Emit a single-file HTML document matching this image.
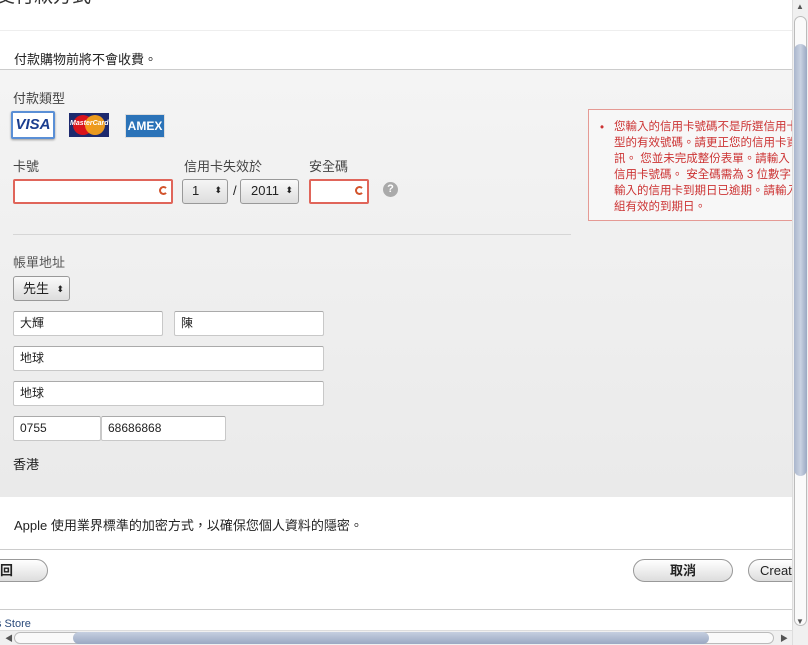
<!DOCTYPE html>
<html><head><meta charset="utf-8"><style>
*{margin:0;padding:0;box-sizing:border-box}
body{width:808px;height:645px;overflow:hidden;background:#fff;font-family:"Liberation Sans","Noto Sans CJK TC",sans-serif;font-size:12px;color:#222;position:relative}
.a{position:absolute}
.inp{position:absolute;background:#fff;border:1px solid #c8c8c8;border-top-color:#aaa;height:25px;font-size:12px;padding:0 6px;line-height:23px;border-radius:2px}
.err{border:2px solid #e0655a;background:#fff;border-radius:2px}
.sel{position:absolute;background:linear-gradient(#fafafa,#ddd);border:1px solid #999;border-radius:3px;font-size:13px;line-height:21px}
.sel .ar{position:absolute;right:5px;top:0;font-size:9px}
.btn{position:absolute;height:23px;border:1px solid #999;border-radius:12px;background:linear-gradient(#fff,#ddd);font-weight:bold;font-size:13px;text-align:center;line-height:21px}
.cc{position:absolute;right:3px;top:5px;width:9px;height:9px;border:2.5px solid #d2542c;border-radius:50%;border-right-color:transparent}
</style></head><body>
<div class="a" style="left:-4px;top:-19px;font-size:19px;color:#333">支付款方式</div>
<div class="a" style="left:0;top:30px;width:792px;height:1px;background:#eee"></div>
<div class="a" style="left:14px;top:49px;font-size:13px">付款購物前將不會收費。</div>
<div class="a" style="left:0;top:69px;width:792px;height:428px;background:linear-gradient(#f4f4f4,#eaeaea);border-top:1px solid #ccc"></div>
<div class="a" style="left:13px;top:88px;font-size:13px;color:#444">付款類型</div>
<div class="a" style="left:11px;top:111px;width:44px;height:28px;border:2px solid #5a8fd6;border-radius:2px;background:#fff;font:italic bold 15px 'Liberation Sans';color:#1a3d8f;text-align:center;line-height:24px;box-shadow:0 1px 2px #999">VISA</div>
<div class="a" style="left:69px;top:113px;width:40px;height:24px;background:#1d2a6e;overflow:hidden">
<div class="a" style="left:4px;top:2px;width:20px;height:20px;border-radius:50%;background:#d9141c"></div>
<div class="a" style="left:16px;top:2px;width:20px;height:20px;border-radius:50%;background:#f6a01a;opacity:.95"></div>
<div class="a" style="left:1px;top:7px;font:italic bold 7px 'Liberation Sans';color:#fff">MasterCard</div></div>
<div class="a" style="left:125px;top:114px;width:40px;height:24px;background:#2b73b8;border:1px solid #ddd;font:bold 12px 'Liberation Sans';color:#fff;text-align:center;line-height:22px">AMEX</div>
<div class="a" style="left:13px;top:156px;font-size:13px;color:#444">卡號</div>
<div class="a" style="left:184px;top:156px;font-size:13px;color:#444">信用卡失效於</div>
<div class="a" style="left:309px;top:156px;font-size:13px;color:#444">安全碼</div>
<div class="a err" style="left:13px;top:179px;width:160px;height:25px"><div class="cc"></div></div>
<div class="sel err" style="left:182px;top:179px;width:46px;height:25px;background:linear-gradient(#f5f5f5,#ddd);padding:0 9px">1<span class="ar">⬍</span></div>
<div class="a" style="left:233px;top:183px;font-size:13px">/</div>
<div class="sel" style="left:240px;top:179px;width:59px;height:25px;padding:0 10px">2011<span class="ar">⬍</span></div>
<div class="a err" style="left:309px;top:179px;width:60px;height:25px"><div class="cc"></div></div>
<div class="a" style="left:383px;top:182px;width:15px;height:15px;border-radius:50%;background:#aaa;color:#fff;font:bold 11px 'Liberation Sans';text-align:center;line-height:15px">?</div>
<div class="a" style="left:13px;top:234px;width:558px;height:1px;background:#d6d6d6"></div>
<div class="a" style="left:588px;top:109px;width:210px;height:112px;border:1px solid #e59a94;background:#f7f7f7"></div>
<div class="a" style="left:600px;top:120px;color:#c33;font-size:11.5px;line-height:16px;white-space:nowrap">•</div>
<div class="a" style="left:614px;top:119px;color:#c33;font-size:11.5px;line-height:16px;white-space:nowrap">您輸入的信用卡號碼不是所選信用卡類<br>型的有效號碼。請更正您的信用卡資<br>訊。 您並未完成整份表單。請輸入<br>信用卡號碼。 安全碼需為 3 位數字<br>輸入的信用卡到期日已逾期。請輸入<br>組有效的到期日。</div>
<div class="a" style="left:13px;top:252px;font-size:13px;color:#555">帳單地址</div>
<div class="sel" style="left:13px;top:276px;width:57px;height:25px;padding:0 9px;line-height:23px">先生<span class="ar" style="top:1px">⬍</span></div>
<div class="inp" style="left:13px;top:311px;width:150px">大輝</div>
<div class="inp" style="left:174px;top:311px;width:150px">陳</div>
<div class="inp" style="left:13px;top:346px;width:311px">地球</div>
<div class="inp" style="left:13px;top:381px;width:311px">地球</div>
<div class="inp" style="left:13px;top:416px;width:88px">0755</div>
<div class="inp" style="left:101px;top:416px;width:125px">68686868</div>
<div class="a" style="left:13px;top:454px;font-size:13px">香港</div>
<div class="a" style="left:14px;top:515px;font-size:13px">Apple 使用業界標準的加密方式，以確保您個人資料的隱密。</div>
<div class="a" style="left:0;top:549px;width:792px;height:1px;background:#ccc"></div>
<div class="btn" style="left:-20px;top:559px;width:68px;text-align:left;padding-left:19px">回</div>
<div class="btn" style="left:633px;top:559px;width:100px">取消</div>
<div class="btn" style="left:748px;top:559px;width:60px;font-weight:normal;text-align:left;padding-left:11px">Create</div>
<div class="a" style="left:0;top:609px;width:792px;height:1px;background:#ccc"></div>
<div class="a" style="left:-4px;top:618px;font-size:11px;color:#2a4a7a">s Store</div>
<div class="a" style="left:0;top:630px;width:792px;height:15px;background:#f0f0f0;border-top:1px solid #ddd">
<div class="a" style="left:5px;top:2px;font-size:8px;color:#555">◀</div>
<div class="a" style="left:14px;top:1px;width:760px;height:12px;border:1px solid #bbb;border-radius:6px;background:#fafafa"></div>
<div class="a" style="left:73px;top:1px;width:636px;height:12px;border-radius:6px;background:linear-gradient(#c5cfe0,#9aa8c2)"></div>
<div class="a" style="left:780px;top:2px;font-size:8px;color:#555">▶</div></div>
<div class="a" style="left:792px;top:0;width:16px;height:645px;background:#f0f0f0;border-left:1px solid #ddd">
<div class="a" style="left:3px;top:2px;font-size:8px;color:#555">▲</div>
<div class="a" style="left:1px;top:16px;width:13px;height:610px;border:1px solid #bbb;border-radius:7px;background:#fafafa"></div>
<div class="a" style="left:1px;top:44px;width:13px;height:432px;border-radius:7px;background:linear-gradient(90deg,#aab6cc,#c9d2e2,#9aa8c2)"></div>
<div class="a" style="left:3px;top:617px;font-size:8px;color:#555">▼</div></div>
</body></html>
